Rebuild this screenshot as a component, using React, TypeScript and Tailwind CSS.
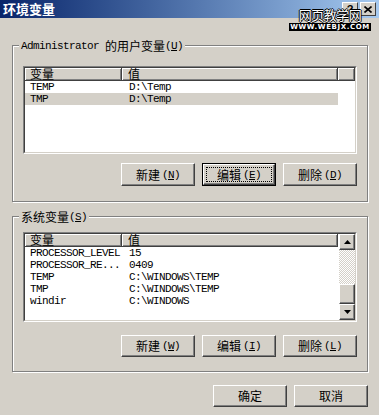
import React from 'react';

const zh = "font-['Noto_Sans_CJK_SC',sans-serif] text-[12px] tracking-normal leading-[12px]";

function Zh({ children }: { children: React.ReactNode }) {
  return <span className={zh}>{children}</span>;
}

function Key({ k }: { k: string }) {
  return (
    <span>
      (<span className="underline underline-offset-1">{k}</span>)
    </span>
  );
}

function Btn({ label, k, isDefault, h = 'h-[22px]' }: { label: string; k?: string; isDefault?: boolean; h?: string }) {
  const face = (
    <div className="h-full w-full border border-t-white border-l-white border-r-[#404040] border-b-[#404040] shadow-[inset_-1px_-1px_0_#808080] flex items-center justify-center">
      <div
        className={
          isDefault
            ? 'flex-1 self-stretch m-[2px] flex items-center justify-center gap-[2px] border border-dotted border-black'
            : 'flex items-center gap-[2px]'
        }
      >
        <Zh>{label}</Zh>
        {k && <Key k={k} />}
      </div>
    </div>
  );
  if (isDefault) {
    return <div className={`w-[74px] ${h} border border-black`}>{face}</div>;
  }
  return <div className={`w-[74px] ${h}`}>{face}</div>;
}

function Arrow({ up }: { up?: boolean }) {
  return (
    <div className="w-[16px] h-[16px] bg-[#d4d0c8] border border-t-white border-l-white border-r-[#404040] border-b-[#404040] shadow-[inset_-1px_-1px_0_#808080] flex items-center justify-center">
      <svg width="7" height="4" viewBox="0 0 7 4">
        <polygon points={up ? '3.5,0 7,4 0,4' : '0,0 7,0 3.5,4'} fill="#000" />
      </svg>
    </div>
  );
}

type Row = [string, string];

function ListView({ rows, selected, scroll, h }: { rows: Row[]; selected?: number; scroll?: boolean; h: string }) {
  const head = 'h-[13px] bg-[#d4d0c8] border-r border-b border-[#404040] shadow-[inset_1px_1px_0_#fff,inset_-1px_-1px_0_#808080] flex items-center';
  return (
    <div className={`${h} border border-t-[#808080] border-l-[#808080] border-b-white border-r-white`}>
      <div className="h-full border border-t-[#404040] border-l-[#404040] border-b-[#d4d0c8] border-r-[#d4d0c8] bg-white flex">
        <div className="flex-1 flex flex-col">
          <div className="flex">
            <div className={`${head} w-[97px] pl-[5px]`}>
              <Zh>变量</Zh>
            </div>
            <div className={`${head} w-[216px] pl-[6px]`}>
              <Zh>值</Zh>
            </div>
            {!scroll && <div className={`${head} flex-1`} />}
          </div>
          {rows.map((r, i) => (
            <div key={i} className={`flex h-[12px] items-center w-[313px] ${i === selected ? 'bg-[#d4d0c8]' : ''}`}>
              <div className="w-[97px] pl-[5px] whitespace-pre">{r[0]}</div>
              <div className="w-[216px] pl-[7px] whitespace-pre">{r[1]}</div>
            </div>
          ))}
        </div>
        {scroll && (
          <div className="w-[16px] flex flex-col">
            <Arrow up />
            <div className="flex-1 bg-[conic-gradient(#fff_25%,#d4d0c8_0_50%,#fff_0_75%,#d4d0c8_0)] bg-size-[2px_2px]" />
            <div className="h-[20px] bg-[#d4d0c8] border border-t-white border-l-white border-r-[#404040] border-b-[#404040] shadow-[inset_-1px_-1px_0_#808080]" />
            <Arrow />
          </div>
        )}
      </div>
    </div>
  );
}

export default function App() {
  return (
    <div className="relative w-[379px] h-[415px] overflow-hidden bg-[#d4d0c8] text-black font-['Liberation_Mono','Noto_Sans_CJK_SC',monospace] text-[11px] tracking-[-0.6px] leading-[12px]">
      {/* title bar */}
      <div className="h-[18px] bg-gradient-to-r from-[#0a246a] to-[#a6caf0] flex items-center justify-between pl-[3px] pr-[3px]">
        <span className="font-['Noto_Sans_CJK_SC',sans-serif] font-bold text-white text-[13px] tracking-normal leading-[14px]">环境变量</span>
        <div className="flex gap-[2px]">
          <div className="w-[16px] h-[14px] bg-[#d4d0c8] border border-t-white border-l-white border-r-[#404040] border-b-[#404040] flex items-center justify-center font-['Liberation_Sans',sans-serif] font-bold text-[11px] tracking-normal">?</div>
          <div className="w-[16px] h-[14px] bg-[#d4d0c8] border border-t-white border-l-white border-r-[#404040] border-b-[#404040] flex items-center justify-center">
            <svg width="8" height="7" viewBox="0 0 8 7">
              <path d="M0.5 0.5 L7.5 6.5 M7.5 0.5 L0.5 6.5" stroke="#000" strokeWidth="1.6" />
            </svg>
          </div>
        </div>
      </div>

      {/* watermark */}
      <div className="absolute left-[296px] top-[7px] w-[68px] flex flex-col items-center">
        <span className="font-['Noto_Sans_CJK_SC',sans-serif] text-[13px] leading-[16px] tracking-[-0.5px] text-white [text-shadow:1px_0_0_#000,-1px_0_0_#000,0_1px_0_#000,0_-1px_0_#000]">网页教学网</span>
        <span className="bg-black text-white font-['DejaVu_Sans',sans-serif] font-bold text-[7px] leading-[8px] tracking-[0.6px] px-[1px]">WWW.WEBJX.COM</span>
      </div>

      {/* user variables */}
      <div className="relative mt-[27px] ml-[12px] w-[356px] border border-[#808080] shadow-[inset_1px_1px_0_#fff,1px_1px_0_#fff] pt-[20px] pb-[15px] px-[10px]">
        <div className="absolute -top-[7px] left-[6px] bg-[#d4d0c8] px-[2px] flex items-center h-[14px]">
          Administrator&nbsp;<Zh>的用户变量</Zh>
          <Key k="U" />
        </div>
        <ListView
          h="h-[88px]"
          selected={1}
          rows={[
            ['TEMP', 'D:\\Temp'],
            ['TMP', 'D:\\Temp'],
          ]}
        />
        <div className="mt-[9px] flex justify-end gap-[7px]">
          <Btn label="新建" k="N" h="h-[23px]" />
          <Btn label="编辑" k="E" h="h-[23px]" isDefault />
          <Btn label="删除" k="D" h="h-[23px]" />
        </div>
      </div>

      {/* system variables */}
      <div className="relative mt-[14px] ml-[12px] w-[356px] border border-[#808080] shadow-[inset_1px_1px_0_#fff,1px_1px_0_#fff] pt-[15px] pb-[14px] px-[10px]">
        <div className="absolute -top-[7px] left-[6px] bg-[#d4d0c8] px-[2px] flex items-center h-[14px]">
          <Zh>系统变量</Zh>
          <Key k="S" />
        </div>
        <ListView
          h="h-[90px]"
          scroll
          rows={[
            ['PROCESSOR_LEVEL', '15'],
            ['PROCESSOR_RE...', '0409'],
            ['TEMP', 'C:\\WINDOWS\\TEMP'],
            ['TMP', 'C:\\WINDOWS\\TEMP'],
            ['windir', 'C:\\WINDOWS'],
          ]}
        />
        <div className="mt-[13px] flex justify-end gap-[7px]">
          <Btn label="新建" k="W" />
          <Btn label="编辑" k="I" />
          <Btn label="删除" k="L" />
        </div>
      </div>

      {/* dialog buttons */}
      <div className="mt-[13px] pr-[11px] flex justify-end gap-[7px]">
        <Btn label="确定" />
        <Btn label="取消" />
      </div>
    </div>
  );
}
